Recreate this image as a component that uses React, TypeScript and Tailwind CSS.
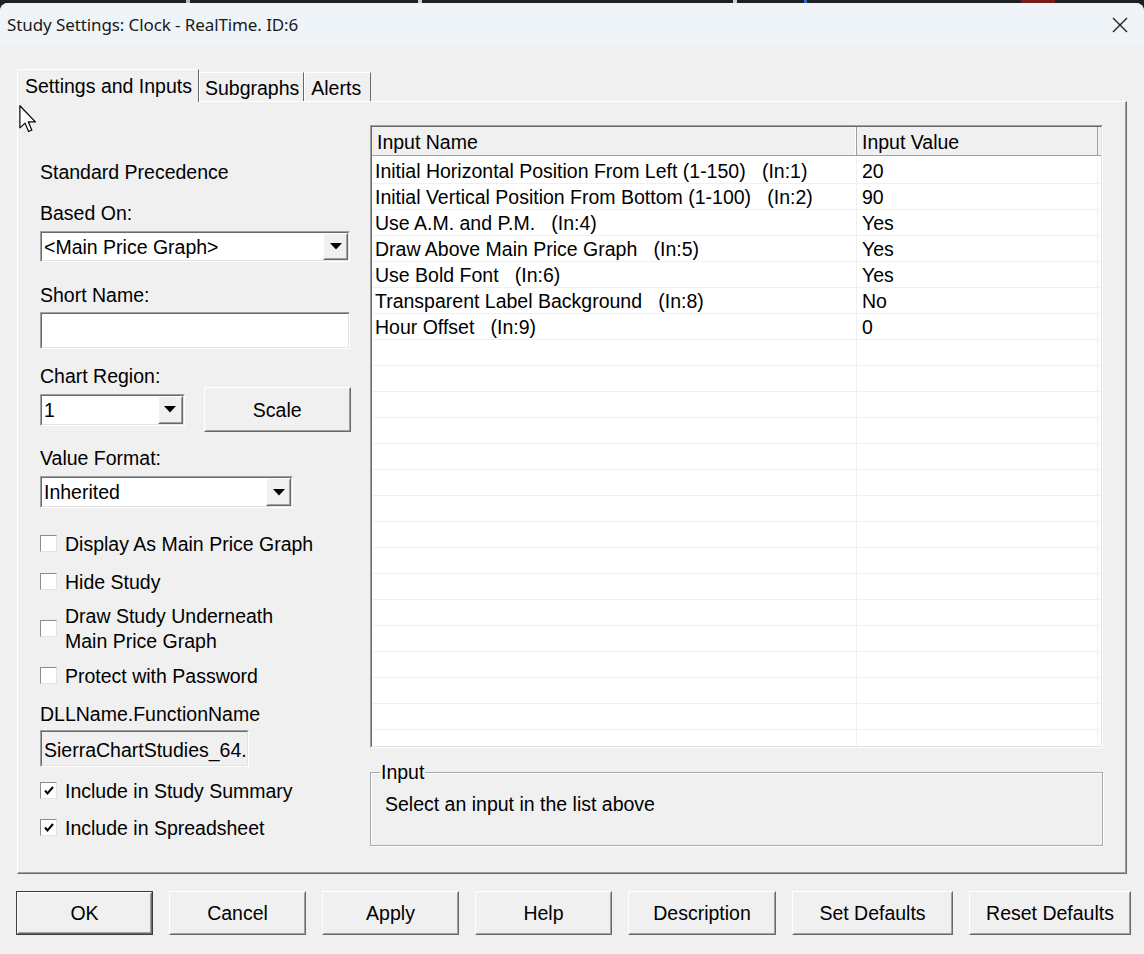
import React from 'react';

const ROWS: [string, string][] = [
  ['Initial Horizontal Position From Left (1-150)   (In:1)', '20'],
  ['Initial Vertical Position From Bottom (1-100)   (In:2)', '90'],
  ['Use A.M. and P.M.   (In:4)', 'Yes'],
  ['Draw Above Main Price Graph   (In:5)', 'Yes'],
  ['Use Bold Font   (In:6)', 'Yes'],
  ['Transparent Label Background   (In:8)', 'No'],
  ['Hour Offset   (In:9)', '0'],
];

const BUTTONS = [
  { label: 'OK', w: 'w-[137px]', isDefault: true },
  { label: 'Cancel', w: 'w-[137px]' },
  { label: 'Apply', w: 'w-[137px]' },
  { label: 'Help', w: 'w-[137px]' },
  { label: 'Description', w: 'w-[148px]' },
  { label: 'Set Defaults', w: 'w-[161px]' },
  { label: 'Reset Defaults', w: 'w-[162px]' },
];

// classic sunken edit/combo frame
function Sunken({ className = '', children }: { className?: string; children?: React.ReactNode }) {
  return (
    <div className={`border border-t-[#a0a0a0] border-l-[#a0a0a0] border-b-white border-r-white ${className}`}>
      <div className="h-full border border-t-[#696969] border-l-[#696969] border-b-[#e3e3e3] border-r-[#e3e3e3] bg-white flex items-center">
        {children}
      </div>
    </div>
  );
}

function Raised({ className = '', children }: { className?: string; children?: React.ReactNode }) {
  return (
    <div className={`border border-t-white border-l-white border-b-[#696969] border-r-[#696969] ${className}`}>
      <div className="h-full border border-t-[#f0f0f0] border-l-[#f0f0f0] border-b-[#a0a0a0] border-r-[#a0a0a0] bg-[#f0f0f0] flex items-center justify-center">
        {children}
      </div>
    </div>
  );
}

function Combo({ value, className }: { value: string; className: string }) {
  return (
    <Sunken className={className}>
      <span className="flex-1 pl-[2px] pt-[2px] leading-none">{value}</span>
      <Raised className="w-[25px] h-full">
        <svg width="12" height="7" viewBox="0 0 12 7">
          <path d="M0 0 H12 L6 6.5 Z" fill="#000" />
        </svg>
      </Raised>
    </Sunken>
  );
}

function Check({ checked, label }: { checked?: boolean; label: React.ReactNode }) {
  return (
    <div className="flex items-center gap-[8px]">
      <div className="w-[17px] h-[17px] shrink-0 bg-white border border-t-[#8c8c8c] border-l-[#8c8c8c] border-b-[#e3e3e3] border-r-[#e3e3e3] flex items-center justify-center">
        {checked && (
          <svg width="12" height="12" viewBox="0 0 12 12">
            <path d="M2 5.5 L4.5 8.5 L10 2" stroke="#000" strokeWidth="2" fill="none" />
          </svg>
        )}
      </div>
      <div className="leading-[25px] pt-[2px]">{label}</div>
    </div>
  );
}

export default function App() {
  return (
    <div className="w-[1144px] h-[954px] bg-[#1f1f1f] overflow-hidden relative font-['Liberation_Sans',Arial,sans-serif] text-[19.5px] text-black">
      {/* bits of the window behind */}
      <div className="absolute top-0 left-[186px] w-[4px] h-[3px] bg-[#bdbdbd]" />
      <div className="absolute top-0 left-[418px] w-[4px] h-[3px] bg-[#d0d0d0]" />
      <div className="absolute top-0 left-[733px] w-[4px] h-[3px] bg-[#d0d0d0]" />
      <div className="absolute top-0 left-[804px] w-[3px] h-[3px] bg-[#2a6cc8]" />
      <div className="absolute top-0 left-[1021px] w-[34px] h-[3px] bg-[#7a1d1d]" />

      <div className="mt-[3px] h-[951px] rounded-t-[8px] bg-[#f0f0f0] flex flex-col overflow-hidden">
        {/* title bar */}
        <div className="h-[43px] shrink-0 bg-[#eff4f9] flex items-center justify-between pl-[7px] pr-[16px]">
          <span className="font-['Noto_Sans',sans-serif] text-[17px] text-[#1a1a1a] tracking-[-0.1px] pt-[1px]">
            Study Settings: Clock - RealTime. ID:6
          </span>
          <svg width="16" height="16" viewBox="0 0 16 16">
            <path d="M1 1 L15 15 M15 1 L1 15" stroke="#1a1a1a" strokeWidth="1.3" />
          </svg>
        </div>

        {/* tabs */}
        <div className="pl-[17px] mt-[23px] flex items-end h-[32px] relative z-10">
          <div className="h-[33px] pl-[7px] pr-[6px] pt-[1px] bg-[#f0f0f0] border-t border-l border-white border-r border-r-[#696969] flex items-center -mb-px">
            Settings and Inputs
          </div>
          <div className="h-[29px] pl-[5px] pr-[4px] border-t border-l border-white border-r border-r-[#696969] flex items-center pt-[3px]">
            Subgraphs
          </div>
          <div className="h-[29px] pl-[6px] pr-[9px] border-t border-l border-white border-r border-r-[#696969] flex items-center pt-[3px]">
            Alerts
          </div>
        </div>

        {/* tab panel */}
        <div className="ml-[17px] w-[1110px] h-[773px] border border-t-white border-l-white border-b-[#696969] border-r-[#696969]">
          <div className="h-full border-b border-r border-b-[#a0a0a0] border-r-[#a0a0a0] flex items-start pl-[22px] relative">
            {/* cursor */}
            <svg className="absolute left-[1px] top-[3px]" width="18" height="28" viewBox="0 0 12 19">
              <path d="M0.5 0.5 V15.5 L4 12.3 L6.4 18 L8.6 17 L6.2 11.5 L11 11.5 Z" fill="#fff" stroke="#000" strokeWidth="0.8" strokeLinejoin="round" />
            </svg>

            {/* left column */}
            <div className="w-[311px] flex flex-col pt-[59px] leading-[22px]">
              <div>Standard Precedence</div>
              <div className="mt-[19px]">Based On:</div>
              <Combo value="<Main Price Graph>" className="mt-[7px] w-[310px] h-[31px]" />
              <div className="mt-[22px]">Short Name:</div>
              <Sunken className="mt-[6px] w-[310px] h-[37px]" />
              <div className="mt-[16px]">Chart Region:</div>
              <div className="mt-[0px] flex items-center">
                <Combo value="1" className="w-[145px] h-[32px]" />
                <Raised className="ml-[19px] w-[148px] h-[45px]">
                  <span className="pt-[1px]">Scale</span>
                </Raised>
              </div>
              <div className="mt-[15px]">Value Format:</div>
              <Combo value="Inherited" className="mt-[7px] w-[253px] h-[32px]" />
              <div className="mt-[22px] flex flex-col">
                <Check label="Display As Main Price Graph" />
                <div className="mt-[11px]">
                  <Check label="Hide Study" />
                </div>
                <div className="mt-[7px]">
                  <Check
                    label={
                      <>
                        Draw Study Underneath
                        <br />
                        Main Price Graph
                      </>
                    }
                  />
                </div>
                <div className="mt-[8px]">
                  <Check label="Protect with Password" />
                </div>
              </div>
              <div className="mt-[12px] pt-[2px]">DLLName.FunctionName</div>
              <Sunken className="mt-[5px] w-[209px] h-[37px]">
                <div className="w-full h-full bg-[#f0f0f0] flex items-center pl-[2px] pt-[2px]">SierraChartStudies_64.</div>
              </Sunken>
              <div className="mt-[10px] flex flex-col gap-[10px]">
                <Check checked label="Include in Study Summary" />
                <Check checked label="Include in Spreadsheet" />
              </div>
            </div>

            {/* right column */}
            <div className="ml-[19px] w-[733px] pt-[23px] flex flex-col">
              <div className="h-[623px] border border-t-[#a0a0a0] border-l-[#a0a0a0] border-b-white border-r-white">
                <div className="h-full border border-t-[#696969] border-l-[#696969] border-b-[#e3e3e3] border-r-[#e3e3e3] bg-white overflow-hidden flex flex-col">
                  <div className="h-[29px] shrink-0 flex bg-[#f0f0f0] border-b border-[#a0a0a0]">
                    <div className="w-[485px] border-r border-[#a0a0a0] pl-[5px] pt-[4px] flex items-center shadow-[inset_-1px_0_0_#fff]">Input Name</div>
                    <div className="w-[241px] border-r border-[#a0a0a0] pl-[5px] pt-[4px] flex items-center">Input Value</div>
                    <div className="flex-1" />
                  </div>
                  <div className="pt-[2px]">
                    {Array.from({ length: 24 }).map((_, i) => {
                      const r = ROWS[i];
                      return (
                        <div key={i} className="h-[26px] flex border-b border-[#f0f0f0]">
                          <div className="w-[485px] border-r border-[#f0f0f0] pl-[3px] pt-[2px] flex items-center whitespace-pre">{r ? r[0] : ''}</div>
                          <div className="w-[241px] border-r border-[#f0f0f0] pl-[5px] pt-[2px] flex items-center">{r ? r[1] : ''}</div>
                          <div className="flex-1" />
                        </div>
                      );
                    })}
                  </div>
                </div>
              </div>

              <fieldset className="mt-[13px] h-[85px] border border-[#a9a9a9] shadow-[inset_1px_1px_0_#fff,1px_1px_0_#fff] pl-[14px] pr-0 leading-[22px] min-w-0">
                <legend className="ml-[-5px] px-[1px] leading-[22px]">Input</legend>
                <div className="mt-[10px]">Select an input in the list above</div>
              </fieldset>
            </div>
          </div>
        </div>

        {/* bottom buttons */}
        <div className="mt-[17px] pl-[16px] flex gap-[16px]">
          {BUTTONS.map((b) =>
            b.isDefault ? (
              <div key={b.label} className={`${b.w} h-[44px] border border-[#3c3c3c]`}>
                <Raised className="h-full">
                  <span className="pt-[2px]">{b.label}</span>
                </Raised>
              </div>
            ) : (
              <Raised key={b.label} className={`${b.w} h-[44px]`}>
                <span className="pt-[2px]">{b.label}</span>
              </Raised>
            )
          )}
        </div>
      </div>
    </div>
  );
}
